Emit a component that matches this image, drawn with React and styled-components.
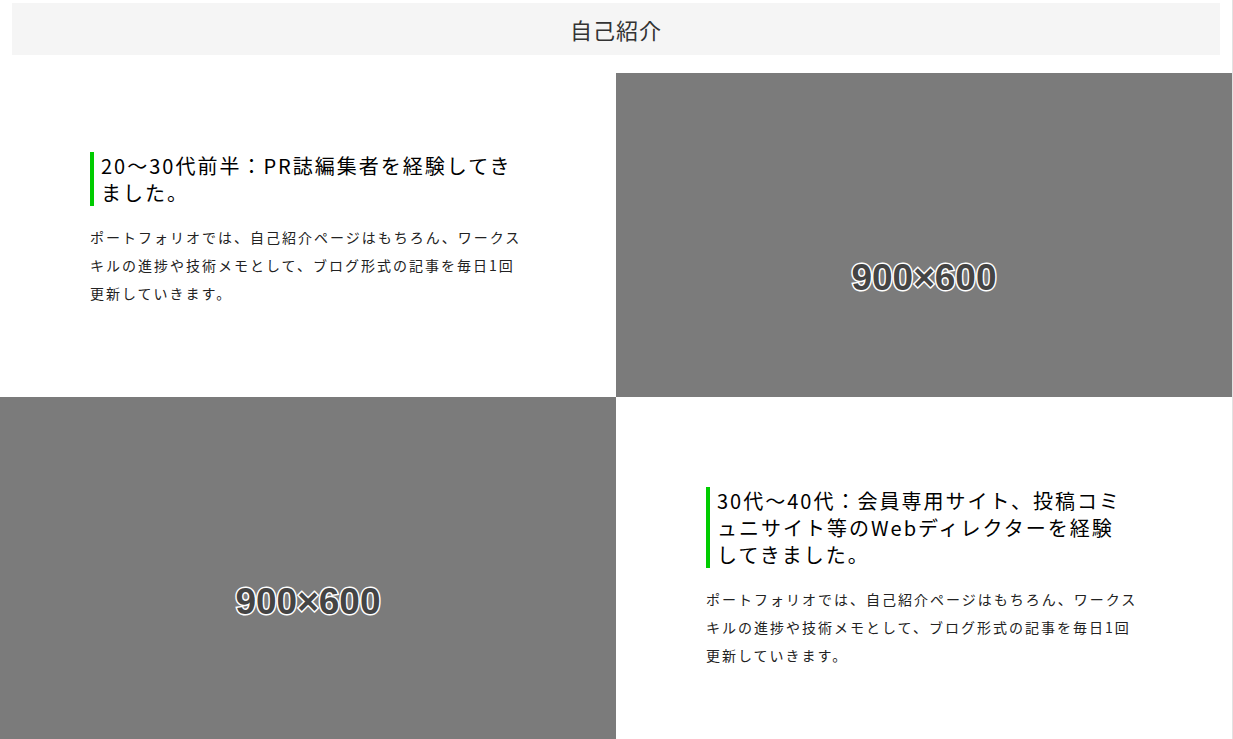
import React from "react";
import styled, { createGlobalStyle } from "styled-components";

const GlobalStyle = createGlobalStyle`
  html, body {
    margin: 0;
    padding: 0;
    background: #fff;
  }
  body {
    font-family: "Noto Sans CJK JP", "Noto Sans", sans-serif;
    color: #111;
  }
`;

const Page = styled.div`
  border-right: 1px solid #e2e2e2;
  min-height: 739px;
  overflow: hidden;
`;

const Header = styled.header`
  margin: 3px 12px 18px;
  height: 52px;
  background: #f5f5f5;
  display: flex;
  align-items: center;
  justify-content: center;
`;

const Title = styled.h1`
  margin: 0;
  font-size: 22px;
  font-weight: 400;
  letter-spacing: 1px;
  color: #333;
  line-height: 52px;
`;

const Row = styled.section`
  display: grid;
  grid-template-columns: 616px 1fr;
`;

const TextCol = styled.div`
  padding: ${p => p.$top}px 90px 90px;
  order: ${p => (p.$reverse ? 2 : 1)};
`;

const Heading = styled.h2`
  margin: 0;
  border-left: 4px solid #00cc00;
  padding: 0 9px 0 7px;
  font-size: 20px;
  line-height: 27px;
  letter-spacing: 2px;
  font-weight: 400;
  color: #000;
`;

const Body = styled.p`
  margin: 17px 0 0;
  font-size: 14px;
  line-height: 28px;
  letter-spacing: 2px;
  color: #222;
`;

const ImageCol = styled.div`
  position: relative;
  overflow: hidden;
  order: ${p => (p.$reverse ? 1 : 2)};
`;

const Placeholder = styled.div`
  position: absolute;
  top: 0;
  left: 0;
  width: 100%;
  aspect-ratio: 3 / 2;
  background: #7b7b7b;
  display: flex;
  align-items: center;
  justify-content: center;
  font-family: "Liberation Sans", Arial, sans-serif;
  font-weight: 700;
  font-size: 37px;
  color: #444;
  -webkit-text-stroke: 3px #fff;
  paint-order: stroke fill;
`;

const items = [
  {
    title: "20〜30代前半：PR誌編集者を経験してきました。",
    top: 79,
  },
  {
    title: "30代〜40代：会員専用サイト、投稿コミュニサイト等のWebディレクターを経験してきました。",
    top: 90,
    reverse: true,
  },
];

const text =
  "ポートフォリオでは、自己紹介ページはもちろん、ワークスキルの進捗や技術メモとして、ブログ形式の記事を毎日1回更新していきます。";

export default function App() {
  return (
    <>
      <GlobalStyle />
      <Page>
        <Header>
          <Title>自己紹介</Title>
        </Header>
        {items.map((item, i) => (
          <Row key={i}>
            <TextCol $top={item.top} $reverse={item.reverse}>
              <Heading>{item.title}</Heading>
              <Body>{text}</Body>
            </TextCol>
            <ImageCol $reverse={item.reverse}>
              <Placeholder>900×600</Placeholder>
            </ImageCol>
          </Row>
        ))}
      </Page>
    </>
  );
}
